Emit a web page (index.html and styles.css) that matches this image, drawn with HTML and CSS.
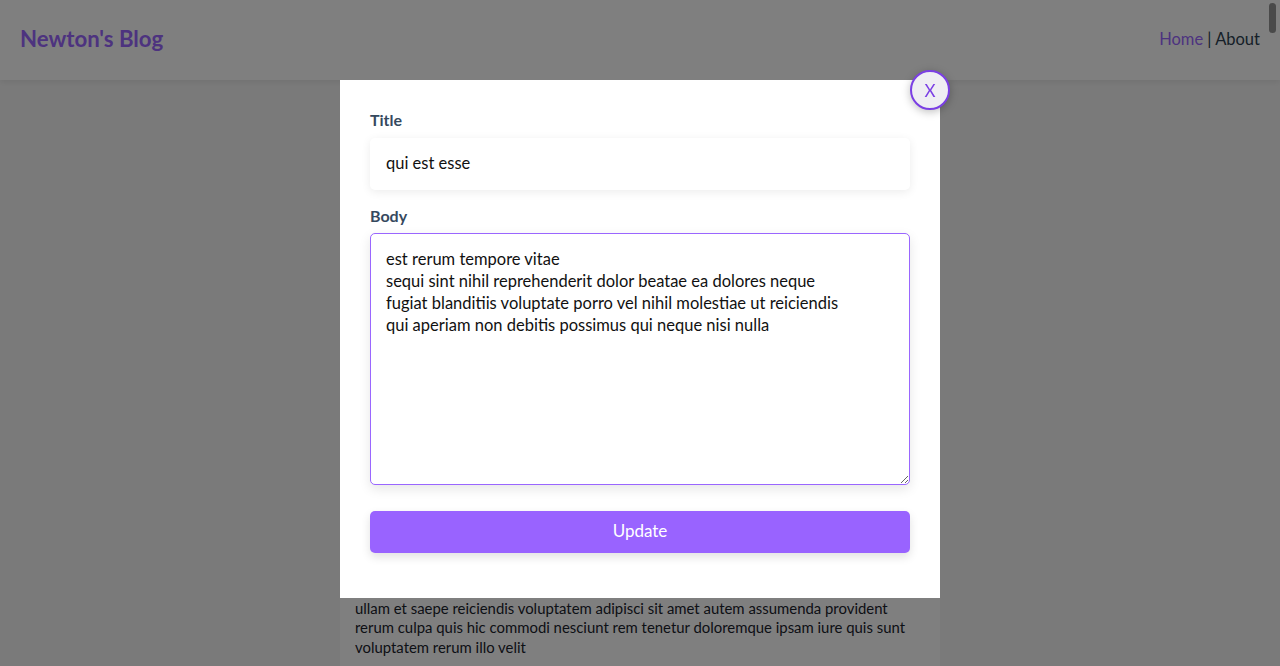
FILE: index.html
```html
<!DOCTYPE html>
<html>
<head>
<meta charset="utf-8">
<title>Newton's Blog</title>
<link rel="stylesheet" href="styles.css">
</head>
<body>
<header class="topbar">
  <a class="brand" href="#">Newton's Blog</a>
  <nav class="nav"><a class="nav-link active" href="#">Home</a> | <a class="nav-link" href="#">About</a></nav>
</header>
<main class="feed">
  <article class="post">
    <h2 class="post-title">sunt aut facere repellat provident occaecati excepturi optio reprehenderit</h2>
    <p class="post-body">quia et suscipit suscipit recusandae consequuntur expedita et cum reprehenderit molestiae ut ut quas totam nostrum rerum est autem sunt rem eveniet architecto</p>
  </article>
  <article class="post">
    <h2 class="post-title">qui est esse</h2>
    <p class="post-body">est rerum tempore vitae sequi sint nihil reprehenderit dolor beatae ea dolores neque fugiat blanditiis voluptate porro vel nihil molestiae ut reiciendis qui aperiam non debitis possimus qui neque nisi nulla</p>
  </article>
  <article class="post">
    <h2 class="post-title">ea molestias quasi exercitationem repellat qui ipsa sit aut</h2>
    <p class="post-body">et iusto sed quo iure voluptatem occaecati omnis eligendi aut ad voluptatem doloribus vel accusantium quis pariatur molestiae porro eius odio et labore et velit aut</p>
  </article>
  <article class="post">
    <h2 class="post-title">eum et est occaecati</h2>
    <p class="post-body">ullam et saepe reiciendis voluptatem adipisci sit amet autem assumenda provident rerum culpa quis hic commodi nesciunt rem tenetur doloremque ipsam iure quis sunt voluptatem rerum illo velit</p>
  </article>
</main>

<div class="overlay">
  <div class="modal">
    <button class="close-btn" type="button">X</button>
    <form class="edit-form">
      <label class="field-label" for="title">Title</label>
      <input class="field-input" id="title" type="text" value="qui est esse">
      <label class="field-label body-label" for="body">Body</label>
      <textarea class="field-textarea" id="body">est rerum tempore vitae
sequi sint nihil reprehenderit dolor beatae ea dolores neque
fugiat blanditiis voluptate porro vel nihil molestiae ut reiciendis
qui aperiam non debitis possimus qui neque nisi nulla</textarea>
      <button class="update-btn" type="button">Update</button>
    </form>
  </div>
</div>
<div class="scroll-thumb"></div>
</body>
</html>
```

FILE: styles.css
```css
* { box-sizing: border-box; }

html, body {
  margin: 0;
  padding: 0;
  height: 100%;
  overflow: hidden;
}

body {
  font-family: Lato, "Open Sans", "Liberation Sans", sans-serif;
  color: #2c3e50;
  background: #f5f5f5;
}

.topbar {
  height: 80px;
  background: #ffffff;
  display: flex;
  align-items: center;
  justify-content: space-between;
  padding: 0 20px 3px;
  box-shadow: 0 2px 6px rgba(0, 0, 0, 0.08);
  position: relative;
  z-index: 1;
}

.brand {
  font-size: 22.2px;
  font-weight: 700;
  color: #9a66ff;
  text-decoration: none;
}

.nav {
  font-size: 16.5px;
  color: #2c3e50;
}

.nav-link {
  color: #2c3e50;
  text-decoration: none;
}

.nav-link.active {
  color: #9a66ff;
}

.feed {
  width: 600px;
  margin: 0 auto;
  background: #ffffff;
  padding: 200px 15px 30px;
}

.post {
  padding-bottom: 10px;
}

.post-title {
  font-size: 20px;
  margin: 0 0 8px;
}

.post-body {
  font-size: 14.9px;
  line-height: 19.5px;
  margin: 0;
  color: #1a222c;
}

.overlay {
  position: fixed;
  inset: 0;
  background: rgba(0, 0, 0, 0.5);
  z-index: 10;
  display: flex;
  justify-content: center;
  align-items: flex-start;
  padding-top: 80px;
}

.modal {
  position: relative;
  width: 600px;
  background: #ffffff;
  padding: 30px 30px 45px;
}

.close-btn {
  position: absolute;
  top: -10px;
  right: -10px;
  width: 40px;
  height: 40px;
  border-radius: 50%;
  border: 2px solid #7b3fe4;
  background: #efeef3;
  color: #7b3fe4;
  font-family: inherit;
  font-size: 17px;
  padding: 0;
  display: flex;
  align-items: center;
  justify-content: center;
  box-shadow: 0 2px 8px rgba(0, 0, 0, 0.25);
}

.edit-form {
  display: flex;
  flex-direction: column;
}

.field-label {
  font-size: 16px;
  font-weight: 700;
  line-height: 20px;
  color: #35495e;
  margin-bottom: 8px;
}

.body-label {
  margin-top: 16px;
  margin-bottom: 7px;
}

.field-input {
  height: 52px;
  border: none;
  border-radius: 5px;
  padding: 0 16px 2px;
  font-family: inherit;
  font-size: 16.5px;
  color: #111;
  background: #fff;
  box-shadow: 0 2px 10px rgba(0, 0, 0, 0.08);
  outline: none;
}

.field-textarea {
  height: 252px;
  border: 1px solid #9a66ff;
  border-radius: 5px;
  padding: 14px 15px 15px;
  font-family: inherit;
  font-size: 16.5px;
  line-height: 22px;
  color: #111;
  background: #fff;
  box-shadow: 0 4px 12px rgba(0, 0, 0, 0.1);
  outline: none;
  resize: vertical;
}

.update-btn {
  margin-top: 26px;
  height: 42px;
  border: none;
  border-radius: 5px;
  background: #9963ff;
  color: #ffffff;
  font-family: inherit;
  font-size: 17px;
  padding: 0 0 3px;
  box-shadow: 0 4px 10px rgba(0, 0, 0, 0.12);
}

.scroll-thumb {
  position: fixed;
  top: 3px;
  right: 4px;
  width: 7px;
  height: 30px;
  border-radius: 4px;
  background: #4a4a4a;
  z-index: 20;
}
```
